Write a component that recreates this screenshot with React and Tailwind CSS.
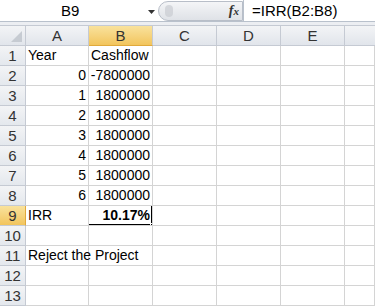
import React from "react";

const cols = [
  { k: "A", w: "w-[63px]" },
  { k: "B", w: "w-[64px]" },
  { k: "C", w: "w-[64px]" },
  { k: "D", w: "w-[64px]" },
  { k: "E", w: "w-[64px]" },
  { k: "F", w: "flex-1" },
];

const data = {
  1: ["Year", "Cashflow"],
  2: [0, -7800000],
  3: [1, 1800000],
  4: [2, 1800000],
  5: [3, 1800000],
  6: [4, 1800000],
  7: [5, 1800000],
  8: [6, 1800000],
  9: ["IRR", "10.17%"],
  11: ["Reject the Project"],
};

function Cell({ w, value, sel, overflow }) {
  const isNum = typeof value === "number";
  return (
    <div
      className={`${w} relative h-full shrink-0 border-r border-b border-[#d4d4d4] flex items-end ${
        isNum || sel ? "justify-end pr-[2px]" : "justify-start pl-[2px]"
      } ${overflow ? "overflow-visible z-10" : "overflow-hidden"} whitespace-nowrap pb-[1px]`}
    >
      {value !== undefined && (
        <span className={`leading-[18px] ${sel ? "font-bold" : ""}`}>{value}</span>
      )}
      {sel && (
        <>
          <div className="absolute left-[-2px] top-[-2px] right-[-1px] bottom-[-1px] border-2 border-black pointer-events-none" />
          <div className="absolute right-[-4px] bottom-[-4px] w-[6px] h-[6px] bg-black border border-white" />
        </>
      )}
    </div>
  );
}

export default function App() {
  const rows = Array.from({ length: 13 }, (_, i) => i + 1);
  return (
    <div
      className="w-[375px] h-[306px] overflow-hidden bg-white text-[14px] text-black"
      style={{ fontFamily: '"Liberation Sans", Arial, sans-serif' }}
    >
      {/* formula bar */}
      <div className="h-[22px] flex border-b border-[#b9c1cc] bg-white">
        <div className="w-[158px] relative flex items-center">
          <span className="absolute left-[61px] top-[2px] leading-[18px] text-[15px]">B9</span>
          <svg className="absolute left-[148px] top-[10px]" width="7" height="4" viewBox="0 0 7 4">
            <path d="M0 0 H7 L3.5 4 Z" fill="#333" />
          </svg>
        </div>
        <div className="w-[85px] h-[20px] mt-[1px] rounded-l-[10px] border border-[#b8bec8] bg-gradient-to-b from-[#f4f5f7] to-[#dfe2e7] relative">
          <div className="absolute left-[6px] top-[3px] w-[8px] h-[12px] rounded-full bg-[#c9ccd1] opacity-70" />
          <span
            className="absolute right-[3px] top-[0px] italic font-bold text-[14px] text-[#333] leading-[18px]"
            style={{ fontFamily: '"Liberation Serif", serif' }}
          >
            f<span className="text-[11px]">x</span>
          </span>
        </div>
        <div className="flex-1 border-l border-[#b9c1cc] pl-[8px] flex items-center">
          <span className="leading-[18px] text-[15px]">=IRR(B2:B8)</span>
        </div>
      </div>
      <div className="h-[4px] bg-[#eceef2] border-b border-[#c5cad3]" />
      {/* column header */}
      <div className="h-[20px] flex">
        <div className="w-[26px] shrink-0 h-full bg-gradient-to-b from-[#f3f4f6] to-[#e1e5eb] border-r border-b border-[#c5cad3] relative">
          <svg className="absolute right-[3px] bottom-[3px]" width="11" height="11" viewBox="0 0 11 11">
            <path d="M11 0 V11 H0 Z" fill="#c6cbd2" />
          </svg>
        </div>
        {cols.map((c) => (
          <div
            key={c.k}
            className={`${c.w} shrink-0 h-full flex items-center justify-center border-r border-b ${
              c.k === "B"
                ? "bg-gradient-to-b from-[#f9e29c] to-[#f2c55c] border-[#c5cad3] border-b-[#e0a93c]"
                : "bg-gradient-to-b from-[#f3f4f6] to-[#e1e5eb] border-[#c5cad3]"
            } ${c.k === "F" ? "border-r-0" : ""}`}
          >
            {c.k !== "F" && <span className="text-[15px] text-[#333] leading-[18px]">{c.k}</span>}
          </div>
        ))}
      </div>
      {rows.map((r) => (
        <div key={r} className="h-[20px] flex">
          <div
            className={`w-[26px] shrink-0 h-full flex items-center justify-center border-r border-b border-[#c5cad3] text-[#333] text-[15px] ${
              r === 9
                ? "bg-gradient-to-b from-[#f9e29c] to-[#f2c55c] border-r-[#e0a93c]"
                : "bg-gradient-to-b from-[#f3f4f6] to-[#e4e8ed]"
            }`}
          >
            <span className="leading-[18px]">{r}</span>
          </div>
          {cols.map((c, ci) => (
            <Cell
              key={c.k}
              w={c.w}
              value={data[r] ? data[r][ci] : undefined}
              sel={r === 9 && ci === 1}
              overflow={r === 11 && ci === 0}
            />
          ))}
        </div>
      ))}
    </div>
  );
}
